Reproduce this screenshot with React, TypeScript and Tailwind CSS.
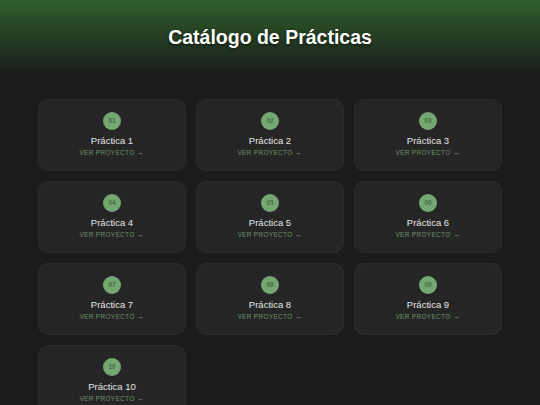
import React from "react";

const items = Array.from({ length: 10 }, (_, i) => i + 1);

export default function App() {
  return (
    <div
      className="min-h-[405px] bg-[#1b1b1b]"
      style={{ fontFamily: '"Liberation Sans", Arial, sans-serif' }}
    >
      <header className="h-[75px] flex items-center justify-center bg-gradient-to-b from-[#2f5e2c] via-[#233a21] via-55% to-[#1b1b1b]">
        <h1 className="text-[19.5px] font-bold text-white [text-shadow:0_1px_3px_rgba(0,0,0,0.6)]">
          Catálogo de Prácticas
        </h1>
      </header>
      <main className="px-[38px] pt-[24px] pb-6">
        <div className="grid grid-cols-3 gap-[10px]">
          {items.map((n) => (
            <div
              key={n}
              className="h-[72px] rounded-[10px] bg-[#252525] border border-[#2c2c2c] flex flex-col items-center pt-[12px]"
            >
              <div className="w-[18px] h-[18px] rounded-full bg-[#74a772] flex items-center justify-center text-[6.5px] font-bold text-[#437140]">
                {String(n).padStart(2, "0")}
              </div>
              <div className="mt-[5px] text-[9.5px] leading-[12px] text-[#e6e6e6]">
                Práctica {n}
              </div>
              <div className="mt-[1px] text-[6.5px] leading-[10px] tracking-[0.3px] text-[#6b9368]">
                VER PROYECTO <span className="text-[7.5px]">→</span>
              </div>
            </div>
          ))}
        </div>
      </main>
    </div>
  );
}
